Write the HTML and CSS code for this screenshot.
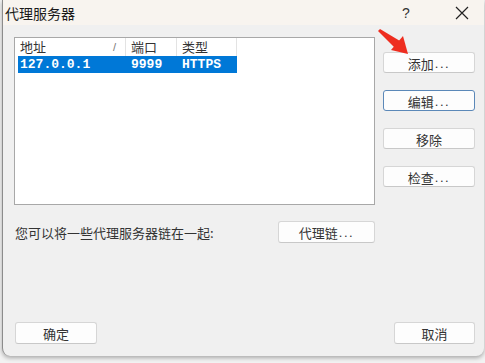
FILE: index.html
```html
<!DOCTYPE html>
<html lang="zh-CN">
<head>
<meta charset="utf-8">
<title>代理服务器</title>
<link rel="stylesheet" href="styles.css">
</head>
<body>
<div class="dialog">
  <div class="titlebar">
    <span class="title">代理服务器</span>
    <span class="help">?</span>
    <span class="close">
      <svg width="14" height="14" viewBox="0 0 14 14"><path d="M1 1 L13 13 M13 1 L1 13" stroke="#222" stroke-width="1.2" fill="none"/></svg>
    </span>
  </div>
  <div class="body">
    <div class="top">
      <div class="list">
        <div class="thead">
          <div class="th c1">地址<span class="sort">/</span></div>
          <div class="th c2">端口</div>
          <div class="th c3">类型</div>
        </div>
        <div class="row selected">
          <div class="td c1">127.0.0.1</div>
          <div class="td c2">9999</div>
          <div class="td c3">HTTPS</div>
        </div>
      </div>
      <div class="side">
        <button class="btn">添加<span class="dots">...</span></button>
        <button class="btn focus">编辑<span class="dots">...</span></button>
        <button class="btn">移除</button>
        <button class="btn">检查<span class="dots">...</span></button>
      </div>
    </div>
    <div class="chain">
      <span class="label">您可以将一些代理服务器链在一起:</span>
      <button class="btn chain-btn">代理链<span class="dots">...</span></button>
    </div>
    <div class="bottom">
      <button class="btn ok">确定</button>
      <button class="btn cancel">取消</button>
    </div>
  </div>
  <svg class="arrow" width="34" height="28" viewBox="0 0 34 28">
    <path d="M0 2 L2 0 L22 12 L17 19 Z" fill="#ee2d1f"/>
    <path d="M13 21 L25 7 L30 25 Z" fill="#ee2d1f"/>
  </svg>
</div>
</body>
</html>
```
FILE: styles.css
```css
html, body {
  margin: 0;
  padding: 0;
}
body {
  width: 485px;
  height: 363px;
  overflow: hidden;
  background: #f2f2f2;
  font-family: "Noto Sans CJK SC", "Noto Sans", sans-serif;
  color: #333;
}
.dialog {
  position: relative;
  margin-left: 2px;
  width: 482px;
  height: 356px;
  box-sizing: border-box;
  background: #f0f0f0;
  border-left: 1px solid #8c8c8c;
  border-radius: 0 0 8px 8px;
  box-shadow: 0 2px 4px rgba(0,0,0,0.3);
  display: flex;
  flex-direction: column;
}
.titlebar {
  height: 25px;
  background: #f8f4ef;
  display: flex;
  align-items: center;
  padding-left: 2px;
}
.title {
  font-size: 14px;
  color: #1a1a1a;
  flex: 1;
  line-height: 1;
}
.help {
  font-size: 14px;
  color: #333;
  width: 10px;
  margin-right: 43px;
  font-family: "Liberation Sans", sans-serif;
}
.close {
  width: 14px;
  height: 14px;
  margin-right: 15px;
  display: flex;
}
.body {
  flex: 1;
  display: flex;
  flex-direction: column;
  padding: 12px 9px 12px 11px;
}
.top {
  display: flex;
  gap: 8px;
}
.list {
  width: 361px;
  height: 168px;
  box-sizing: border-box;
  border: 1px solid #a8a8a8;
  background: #fff;
}
.thead {
  display: flex;
  height: 18px;
}
.th {
  font-size: 13px;
  line-height: 18px;
  color: #333;
  padding-left: 5px;
  box-sizing: border-box;
  border-right: 1px solid #e3e3e3;
  position: relative;
}
.c1 { width: 111px; }
.c2 { width: 51px; }
.c3 { width: 60px; }
.sort {
  position: absolute;
  left: 98px;
  top: 0;
  color: #777;
  font-size: 11px;
  font-family: "Liberation Sans", sans-serif;
}
.row {
  display: flex;
  height: 17px;
  margin-left: 3px;
}
.row .c1 { width: 108px; }
.selected {
  background: #0078d7;
  width: 219px;
}
.td {
  color: #fff;
  font-family: "Liberation Mono", monospace;
  font-weight: bold;
  font-size: 13px;
  line-height: 17px;
  padding-left: 2px;
  box-sizing: border-box;
}
.row .c2 { padding-left: 5px; }
.row .c3 { padding-left: 5px; }
.side {
  width: 92px;
  display: flex;
  flex-direction: column;
  gap: 17px;
  padding-top: 15px;
}
.btn {
  height: 21px;
  box-sizing: border-box;
  background: #fdfdfd;
  border: 1px solid #d6d6d6;
  border-bottom-color: #c8c8c8;
  border-radius: 3px;
  font-family: "Noto Sans CJK SC", sans-serif;
  font-size: 13px;
  color: #333;
  padding: 1px 0 0 0;
  line-height: 19px;
  display: flex;
  align-items: center;
  justify-content: center;
}
.btn.focus {
  border: 1px solid #5b88b8;
}
.dots {
  letter-spacing: 1.5px;
  margin-left: 1px;
  font-family: "Liberation Sans", sans-serif;
}
.chain {
  width: 361px;
  display: flex;
  justify-content: space-between;
  align-items: center;
  margin-top: 16px;
}
.label {
  font-size: 13px;
  color: #333;
  padding-left: 1px;
}
.chain-btn {
  width: 97px;
  height: 22px;
}
.bottom {
  margin-top: auto;
  display: flex;
  justify-content: space-between;
  padding-left: 1px;
}
.ok {
  width: 82px;
  height: 22px;
}
.cancel {
  width: 81px;
  height: 22px;
}
.arrow {
  position: absolute;
  left: 375px;
  top: 29px;
}
```
